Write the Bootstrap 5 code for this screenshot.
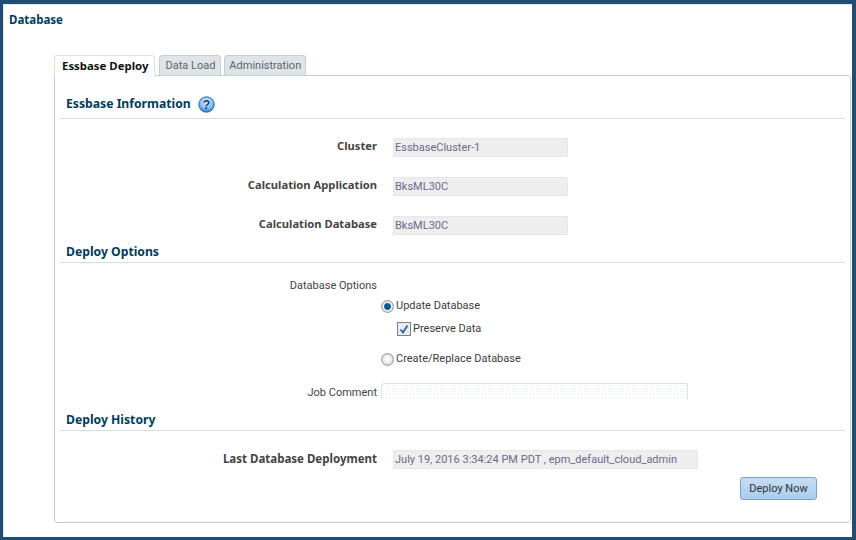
<!DOCTYPE html>
<html lang="en">
<head>
<meta charset="utf-8">
<title>Database</title>
<link href="https://cdn.jsdelivr.net/npm/bootstrap@5.3.0/dist/css/bootstrap.min.css" rel="stylesheet">
<style>
html,body{height:100%;margin:0}
body{background:#1f4d73;font-family:Roboto,"Liberation Sans",sans-serif;font-size:11px;color:#444;overflow:hidden}
.frame{height:540px;padding:4px 4px 3px 3px}
.sheet{height:100%;background:#fff;border-top:1px solid #e4e8ec;border-left:1px solid #e4e8ec;padding:8px 0 14px 5px;display:flex;flex-direction:column}
.bolder{font-family:"Noto Sans","DejaVu Sans",sans-serif;font-weight:700}
.page-title{font-size:11.5px;color:#003d5b;line-height:14px;margin-bottom:28px}
.tabwrap{flex:1;display:flex;flex-direction:column;min-height:0;margin-left:45px;margin-right:1px}
.tabset{border-bottom:0;gap:3px;height:21px;position:relative;z-index:1}
.tabset .nav-link{padding:0 5px;height:21px;line-height:20px;font-size:11px;color:#5f6468;background:#dfe4e8;border:1px solid #c4ced7;border-radius:3px 3px 0 0;margin:0}
.tabset li:last-child .nav-link{padding:0 4px}
.tabset .nav-link.active{padding:0 6px 0 7px;font-size:11.4px;color:#111;background:#fff;border-bottom-color:#fff;height:22px;margin-right:1px}
.pane{flex:1;margin-top:-1px;border:1px solid #c4ced7;border-radius:0 3px 3px 3px;padding:0 5px;background:#fff}
.sec-head{display:flex;align-items:center;gap:7px;padding-left:6px;border-bottom:1px solid #d2dde6;color:#003d5b;font-size:12.2px;line-height:16px}
.sec-a{height:43px;padding-top:14px}
.sec-b{height:22px}
.form-line{display:flex;align-items:flex-start;margin:0}
.lab{width:317px;text-align:right;flex:none;line-height:14px}
.lab-strong{font-size:11.2px;color:#444;padding-top:1px}
.lab-wide{font-size:11.5px;padding-top:2px}
.readout{margin-left:16px;height:19px;line-height:19px;padding:0 2px;background:#eeeeef;color:#6a6a8c;outline:1px dotted #e0e0e4;outline-offset:-1px;flex:none;white-space:nowrap;overflow:hidden}
.w175{width:175px}
.w305{width:305px}
.gap20{margin-top:20px}
.choice{display:flex;align-items:center;gap:2px;height:16px;line-height:16px;color:#3c3c3c}
.choice input{appearance:none;margin:0;flex:none}
.rad{width:13px;height:13px;border-radius:50%;border:1px solid #9a9ea5;background:radial-gradient(circle at 50% 45%,#fff 0,#e8e8e8 60%,#c4c4c4 100%);box-shadow:inset 0 0 1px #888}
.rad:checked{background:radial-gradient(circle,#0b5a94 0,#0b5a94 38%,#f4f6f8 50%,#cfd2d6 100%)}
.chk{width:14px;height:14px;border:1px solid #808080;background:#e6edf7 url("data:image/svg+xml,%3Csvg xmlns='http://www.w3.org/2000/svg' viewBox='0 0 12 12'%3E%3Cpath d='M2.5 6.5 5 9.5 9.5 2.5' fill='none' stroke='%233a5aa8' stroke-width='1.8'/%3E%3C/svg%3E") center/12px no-repeat}
.opts{padding-left:321px}
.comment-box{margin-left:4px;width:307px;height:17px;border:1px solid #dfe3e6;border-bottom:0;border-radius:3px 3px 0 0;background-color:#fff;background-image:radial-gradient(circle,#e3eeee 0.6px,transparent 0.8px);background-size:3px 3px}
.deploy-btn{width:77px;height:23px;padding:0;font-size:11px;line-height:20px;color:#333;background:linear-gradient(#c6def4,#a9cdee);border:1px solid #7ba3c4;border-radius:3px}
.btn-line{display:flex;justify-content:flex-end;padding-right:28px;margin-top:8px}
.help-ico{flex:none;display:block}
</style>
</head>
<body>
<div class="frame">
  <div class="sheet">
    <div class="page-title bolder">Database</div>
    <div class="tabwrap">
      <ul class="nav nav-tabs tabset">
        <li class="nav-item"><a class="nav-link active bolder" href="#">Essbase Deploy</a></li>
        <li class="nav-item"><a class="nav-link" href="#">Data Load</a></li>
        <li class="nav-item"><a class="nav-link" href="#">Administration</a></li>
      </ul>
      <div class="pane">
        <div class="sec-head sec-a bolder">
          <span>Essbase Information</span>
          <svg class="help-ico" width="17" height="17" viewBox="0 0 17 17" role="img" aria-label="Help">
            <defs><radialGradient id="hg" cx="50%" cy="35%" r="65%"><stop offset="0" stop-color="#e2f1fd"/><stop offset="0.6" stop-color="#8dc0ef"/><stop offset="1" stop-color="#2f78cc"/></radialGradient></defs>
            <circle cx="8.5" cy="8.5" r="7.7" fill="url(#hg)" stroke="#2a66ad"/>
            <text x="8.5" y="12.8" text-anchor="middle" font-family="Liberation Sans" font-size="12" font-weight="700" fill="#12407f">?</text>
          </svg>
        </div>
        <div class="form-line" style="margin-top:19px"><span class="lab lab-strong bolder">Cluster</span><span class="readout w175">EssbaseCluster-1</span></div>
        <div class="form-line gap20"><span class="lab lab-strong bolder">Calculation Application</span><span class="readout w175">BksML30C</span></div>
        <div class="form-line gap20"><span class="lab lab-strong bolder">Calculation Database</span><span class="readout w175">BksML30C</span></div>
        <div class="sec-head sec-b bolder" style="margin-top:6px"><span>Deploy Options</span></div>
        <div class="form-line" style="margin-top:16px"><span class="lab">Database Options</span></div>
        <div class="opts">
          <label class="choice" style="margin-top:5px"><input class="rad" type="radio" name="dbopt" checked>Update Database</label>
          <label class="choice" style="margin-top:7px;margin-left:16px"><input class="chk" type="checkbox" checked>Preserve Data</label>
          <label class="choice" style="margin-top:14px"><input class="rad" type="radio" name="dbopt">Create/Replace Database</label>
        </div>
        <div class="form-line" style="margin-top:16px"><span class="lab" style="padding-top:3px">Job Comment</span><div class="comment-box"></div></div>
        <div class="sec-head sec-b bolder" style="margin-top:9px"><span>Deploy History</span></div>
        <div class="form-line" style="margin-top:19px"><span class="lab lab-strong lab-wide bolder">Last Database Deployment</span><span class="readout w305">July 19, 2016 3:34:24 PM PDT , epm_default_cloud_admin</span></div>
        <div class="btn-line"><button type="button" class="btn deploy-btn">Deploy Now</button></div>
      </div>
    </div>
  </div>
</div>
<script src="https://cdn.jsdelivr.net/npm/bootstrap@5.3.0/dist/js/bootstrap.bundle.min.js"></script>
</body>
</html>
